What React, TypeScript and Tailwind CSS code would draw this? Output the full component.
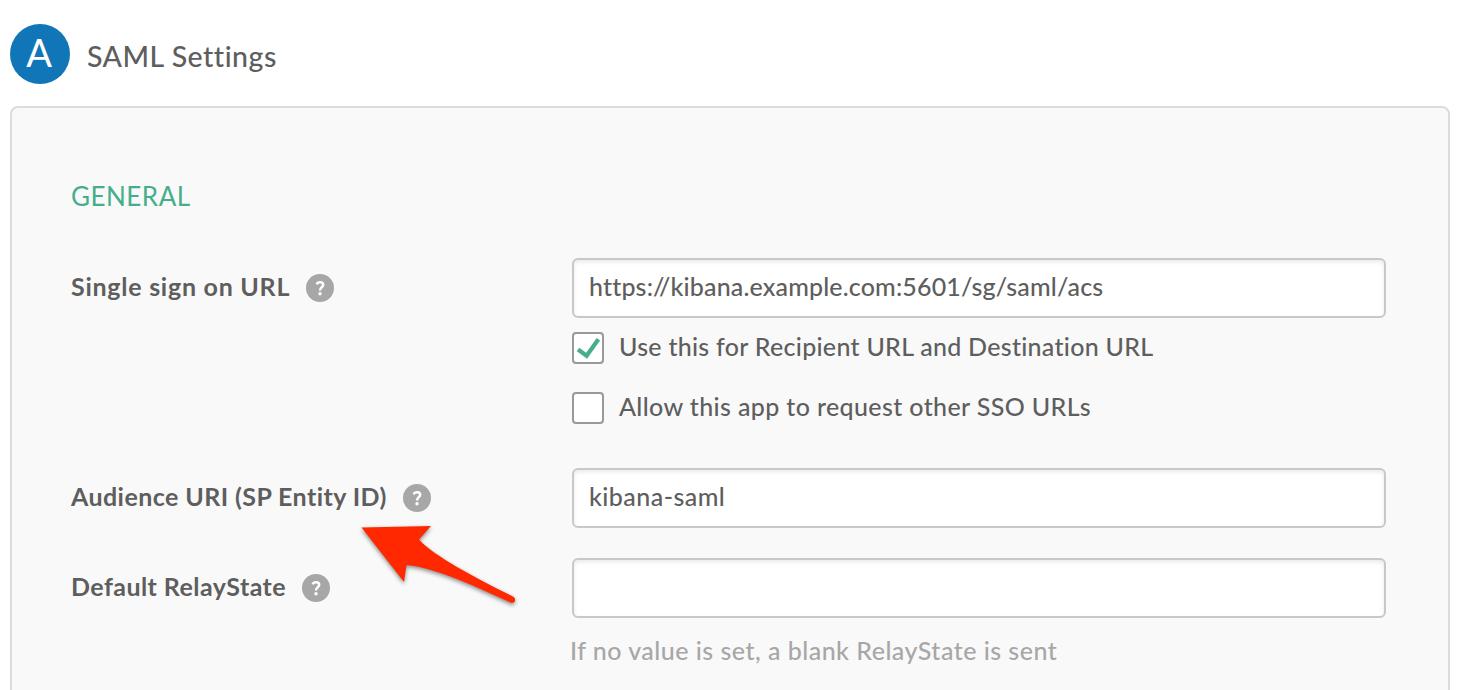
import type { ReactNode } from "react";

function HelpIcon() {
  return (
    <svg viewBox="0 0 28 28" className="mt-[5px] h-7 w-7 shrink-0" aria-label="Help">
      <circle cx="14" cy="14" r="14" fill="#a7a7a7" />
      <path
        d="M10.4 10.1 C11.4 8.9 12.6 8.2 14.1 8.2 C16 8.2 17.2 9.3 17.2 10.8 C17.2 13.1 14 13.3 14 16.4"
        fill="none"
        stroke="#fff"
        strokeWidth="2.5"
      />
      <circle cx="14" cy="19.8" r="1.7" fill="#fff" />
    </svg>
  );
}

function Label({ children, spacing }: { children: ReactNode; spacing: string }) {
  return (
    <div className="flex h-[60px] w-[501px] shrink-0 items-center gap-4 pb-[5px]">
      <span className={`font-bold whitespace-nowrap ${spacing}`}>{children}</span>
      <HelpIcon />
    </div>
  );
}

function Field({ value, spacing }: { value: string; spacing: string }) {
  return (
    <div
      className={`flex h-[60px] w-[814px] items-center rounded-[6px] border-2 border-[#c8c8c8] bg-white pb-[5px] pl-[15px] shadow-[inset_0_2px_4px_rgba(0,0,0,0.09)] ${spacing}`}
    >
      {value}
    </div>
  );
}

function CheckOption({ checked, label, spacing }: { checked: boolean; label: string; spacing: string }) {
  return (
    <div className="flex h-8 items-center">
      <span className="flex h-8 w-8 items-center justify-center rounded-[4px] border-2 border-[#999] bg-white">
        {checked && (
          <svg viewBox="0 0 28 28" className="h-7 w-7 shrink-0">
            <path d="M4 15.5 L12.6 21.7 L24.4 5.2" fill="none" stroke="#46ae8c" strokeWidth="4.2" />
          </svg>
        )}
      </span>
      <span className={`-mt-[5px] pl-[15px] whitespace-nowrap ${spacing}`}>{label}</span>
    </div>
  );
}

export default function App() {
  return (
    <div className="relative flex h-[690px] w-[1468px] flex-col overflow-hidden bg-white px-[10px] pt-6 font-['Lato',sans-serif] text-[25px] leading-[30px] font-medium text-[#5e5e5e] [font-variant-ligatures:none]">
      <header className="flex h-[60px] shrink-0 items-center">
        <div className="flex h-[60px] w-[60px] items-center justify-center rounded-full bg-[#1076b8] pr-[2px] pb-[5px] text-[38px] leading-none font-normal text-white">
          A
        </div>
        <h1 className="pt-[3px] pl-[17px] text-[28.5px] leading-[34px] tracking-[0.5px]">SAML Settings</h1>
      </header>

      <main className="mt-[22px] h-[640px] w-[1440px] shrink-0 rounded-[8px] border-2 border-[#dcdcdc] bg-[#f9f9f9] pl-[59px]">
        <h2 className="mt-[73px] h-[30px] text-[26px] font-normal tracking-[0.5px] text-[#46ae8c]">GENERAL</h2>

        <div className="mt-[47px] flex">
          <Label spacing="tracking-[0.74px]">Single sign on URL</Label>
          <div className="flex flex-col">
            <Field value="https://kibana.example.com:5601/sg/saml/acs" spacing="tracking-[0.16px]" />
            <div className="mt-[14px] flex flex-col gap-7">
              <CheckOption checked label="Use this for Recipient URL and Destination URL" spacing="tracking-[0.28px]" />
              <CheckOption checked={false} label="Allow this app to request other SSO URLs" spacing="tracking-[0.37px]" />
            </div>
          </div>
        </div>

        <div className="mt-11 flex">
          <Label spacing="tracking-[0.42px]">Audience URI (SP Entity ID)</Label>
          <Field value="kibana-saml" spacing="tracking-[0.45px]" />
        </div>

        <div className="mt-[30px] flex">
          <Label spacing="tracking-[0.44px]">Default RelayState</Label>
          <div>
            <Field value="" spacing="tracking-normal" />
            <p className="mt-[17px] -ml-[2px] tracking-[0.48px] text-[#a7a7a7]">
              If no value is set, a blank RelayState is sent
            </p>
          </div>
        </div>
      </main>

      <svg
        viewBox="0 0 180 100"
        className="absolute top-[515px] left-[350px] h-[100px] w-[180px] drop-shadow-[0_2px_2px_rgba(0,0,0,0.45)]"
      >
        <path
          d="M11.5 12.5 L81 11 L69 24.5 C84 41 124 62 163 81.5 C167 84 165 89 160.5 87.5 C126 72 87 53 56.5 50 L54 67 Z"
          fill="#ff2800"
        />
      </svg>
    </div>
  );
}
